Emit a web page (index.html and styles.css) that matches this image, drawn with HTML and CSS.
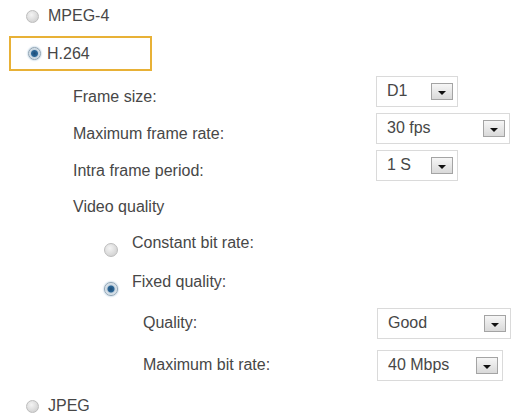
FILE: index.html
```html
<!DOCTYPE html>
<html>
<head>
    <title>Video Settings</title>
    <link rel="stylesheet" href="styles.css">
</head>
<body>
    <div class="panel">
        <div class="opt">
            <span class="radio"></span>
            <span>MPEG-4</span>
        </div>
        <div class="opt opt-active">
            <span class="radio checked"></span>
            <span>H.264</span>
        </div>

        <div class="row row-first">
            <span class="label">Frame size:</span>
            <div class="select select-up w-small"><span>D1</span><span class="arrow"></span></div>
        </div>
        <div class="row">
            <span class="label">Maximum frame rate:</span>
            <div class="select select-up w-wide"><span>30 fps</span><span class="arrow"></span></div>
        </div>
        <div class="row">
            <span class="label">Intra frame period:</span>
            <div class="select select-up w-small"><span>1 S</span><span class="arrow"></span></div>
        </div>
        <div class="row row-short">
            <span class="label">Video quality</span>
        </div>

        <div class="nest nest-first">
            <span class="radio radio-low"></span>
            <span>Constant bit rate:</span>
        </div>
        <div class="nest">
            <span class="radio radio-low checked"></span>
            <span>Fixed quality:</span>
        </div>

        <div class="row sub">
            <span class="label">Quality:</span>
            <div class="select w-wide"><span>Good</span><span class="arrow"></span></div>
        </div>
        <div class="row sub">
            <span class="label">Maximum bit rate:</span>
            <div class="select w-mid"><span>40 Mbps</span><span class="arrow"></span></div>
        </div>

        <div class="opt opt-last">
            <span class="radio"></span>
            <span>JPEG</span>
        </div>
    </div>
</body>
</html>
```

FILE: styles.css
```css
body {
    margin: 0;
    background: #fff;
    color: #474747;
    font-family: "Liberation Sans", Arial, sans-serif;
    font-size: 16px;
    overflow: hidden;
}
.panel {
    display: flex;
    flex-direction: column;
}
.opt {
    display: flex;
    align-items: center;
    gap: 9px;
    height: 32px;
    padding-left: 26px;
}
.opt-active {
    box-sizing: border-box;
    width: 143px;
    height: 35px;
    margin: 4px 0 0 9px;
    padding-left: 17px;
    gap: 6px;
    border: 2px solid #e8b136;
}
.opt-last {
    height: 40px;
}
.radio {
    box-sizing: border-box;
    width: 13px;
    height: 13px;
    border-radius: 50%;
    border: 1px solid #bdbdbd;
    background: radial-gradient(circle at 40% 35%, #f4f4f4, #c9c9c9);
    flex-shrink: 0;
}
.radio.checked {
    border-color: #8fa3b3;
    background: radial-gradient(circle, #1d4d78 0, #2c6797 3px, #c3d2de 4px, #e6ecf1 6px);
    box-shadow: 0 0 2px #7fa7c7;
}
.radio-low {
    width: 14px;
    height: 14px;
    margin-top: 14px;
}
.row {
    display: flex;
    align-items: center;
    height: 37px;
    padding-left: 73px;
}
.row-first {
    margin-top: 7px;
}
.row-short {
    height: 35px;
}
.row.sub {
    height: 42px;
    padding-left: 143px;
}
.label {
    width: 303px;
    flex-shrink: 0;
}
.row.sub .label {
    width: 234px;
}
.nest {
    display: flex;
    align-items: center;
    gap: 14px;
    height: 38px;
    padding-left: 104px;
}
.nest + .nest {
    height: 40px;
}
.select {
    box-sizing: border-box;
    display: flex;
    align-items: center;
    justify-content: space-between;
    height: 31px;
    padding: 0 4px 0 10px;
    border: 1px solid #dadada;
    background: #fff;
}
.select-up {
    margin-bottom: 11px;
}
.w-small {
    width: 82px;
}
.w-mid {
    width: 126px;
}
.w-wide {
    width: 134px;
}
.arrow {
    box-sizing: border-box;
    display: flex;
    justify-content: center;
    align-items: center;
    width: 22px;
    height: 17px;
    border: 1px solid #a4a4a4;
    background: linear-gradient(#f6f6f6, #d9d9d9);
}
.arrow::after {
    content: "";
    margin-top: 3px;
    border-top: 4px solid #111;
    border-left: 4px solid transparent;
    border-right: 4px solid transparent;
}
```
